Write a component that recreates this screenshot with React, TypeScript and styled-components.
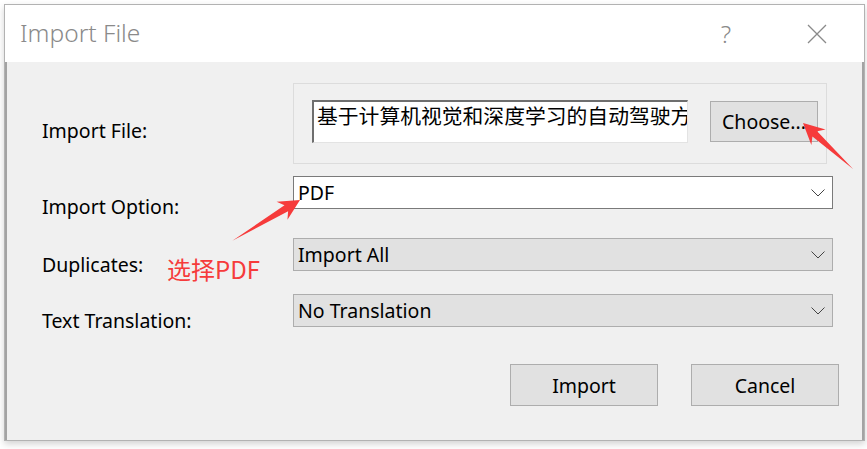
import styled, { createGlobalStyle } from 'styled-components';

const GlobalStyle = createGlobalStyle`
	html, body {
		margin: 0;
		padding: 0;
		background: #ffffff;
	}
	body {
		font-family: 'Noto Sans', 'Noto Sans CJK SC', sans-serif;
		color: #000000;
	}
`;

const Page = styled.div`
	position: relative;
	width: 867px;
	height: 449px;
	overflow: hidden;
`;

const Window = styled.div`
	margin: 4px 0 0 4px;
	width: 861px;
	height: 437px;
	box-sizing: border-box;
	border: 1px solid #b2b2b2;
	box-shadow: 0 3px 7px rgba(0, 0, 0, 0.18);
	display: flex;
	flex-direction: column;
	background: #f0f0f0;
`;

const TitleBar = styled.div`
	height: 57px;
	flex: none;
	background: #ffffff;
	display: flex;
	align-items: center;
	padding: 0 6px 0 15px;
	color: #8a8a8a;
	font-size: 24.5px;
	font-weight: 300;
`;

const Title = styled.div`
	flex: 1;
	margin-top: -2px;
`;

const TitleButton = styled.div<{ $width: number }>`
	width: ${p => p.$width}px;
	height: 57px;
	display: flex;
	align-items: center;
	justify-content: center;
	color: #8a8a8a;
`;

const Body = styled.div`
	flex: 1;
	border-left: 2px solid #a3a3a3;
	border-right: 2px solid #a3a3a3;
	padding: 21px 27px 0 35px;
	display: flex;
	flex-direction: column;
`;

const Row = styled.div<{ $gap: number; $height: number }>`
	display: grid;
	grid-template-columns: 251px 540px;
	align-items: start;
	margin-top: ${p => p.$gap}px;
	height: ${p => p.$height}px;
`;

const Label = styled.div<{ $offset: number }>`
	padding-top: ${p => p.$offset}px;
	font-size: 19.5px;
	line-height: 24px;
	white-space: nowrap;
`;

const GroupBox = styled.div`
	width: 534px;
	height: 81px;
	box-sizing: border-box;
	border: 1px solid #dcdcdc;
	display: flex;
	align-items: flex-start;
	padding: 16px 0 0 18px;
	gap: 22px;
`;

const PathField = styled.div`
	width: 376px;
	height: 43px;
	flex: none;
	box-sizing: border-box;
	background: #ffffff;
	border-top: 2px solid #6e6e6e;
	border-left: 2px solid #6e6e6e;
	border-right: 1px solid #e3e3e3;
	border-bottom: 1px solid #e3e3e3;
	padding: 1px 0 0 3px;
	font-family: 'Noto Sans CJK SC', sans-serif;
	font-size: 20.8px;
	line-height: 24px;
	white-space: nowrap;
	overflow: hidden;
`;

const Button = styled.button<{ $width: number; $height: number }>`
	width: ${p => p.$width}px;
	height: ${p => p.$height}px;
	flex: none;
	box-sizing: border-box;
	background: #e1e1e1;
	border: 1px solid #adadad;
	border-radius: 0;
	padding: 0;
	font-family: 'Noto Sans', sans-serif;
	font-size: 19.5px;
	color: #000000;
	margin-top: ${p => (p.$height === 41 ? 1 : 0)}px;
`;

const Combo = styled.div<{ $editable?: boolean }>`
	width: 540px;
	height: 33px;
	box-sizing: border-box;
	background: ${p => (p.$editable ? '#ffffff' : '#e1e1e1')};
	border: 1px solid ${p => (p.$editable ? '#7a7a7a' : '#adadad')};
	display: flex;
	align-items: center;
	justify-content: space-between;
	padding: 0 7px 0 4px;
	font-size: 19.5px;
	line-height: 24px;
`;

const Actions = styled.div`
	display: flex;
	justify-content: flex-end;
	gap: 33px;
	margin-top: 37px;
	margin-right: -4px;
`;

const Note = styled.div`
	position: absolute;
	left: 167px;
	top: 251px;
	font-family: 'Noto Sans CJK SC', sans-serif;
	font-size: 24px;
	color: #f63b3b;
	white-space: nowrap;
`;

const Overlay = styled.svg`
	position: absolute;
	left: 0;
	top: 0;
	pointer-events: none;
`;

const Chevron = () => (
	<svg width="14" height="8" viewBox="0 0 14 8">
		<polyline points="0.5,0.5 7,7 13.5,0.5" fill="none" stroke="#444" strokeWidth="1" />
	</svg>
);

const CloseIcon = () => (
	<svg width="20" height="20" viewBox="0 0 20 20">
		<path d="M1 1 L19 19 M19 1 L1 19" stroke="#8a8a8a" strokeWidth="1.3" fill="none" />
	</svg>
);

// annotation arrow: tip at (x, y), pointing along angle
const Arrow = ({ x, y, angle, length }: { x: number; y: number; angle: number; length: number }) => (
	<polygon
		transform={`translate(${x} ${y}) rotate(${angle})`}
		points={`${-length},0 -16,-3.5 -21,-10.5 0,0 -21,10.5 -16,3.5`}
		fill="#f63b3b"
	/>
);

export default function App() {
	return (
		<Page>
			<GlobalStyle />
			<Window>
				<TitleBar>
					<Title>Import File</Title>
					<TitleButton $width={100}>?</TitleButton>
					<TitleButton $width={82}>
						<CloseIcon />
					</TitleButton>
				</TitleBar>
				<Body>
					<Row $gap={0} $height={81}>
						<Label $offset={36}>Import File:</Label>
						<GroupBox>
							<PathField>基于计算机视觉和深度学习的自动驾驶方法研究.pdf</PathField>
							<Button $width={108} $height={41}>Choose...</Button>
						</GroupBox>
					</Row>
					<Row $gap={12} $height={33}>
						<Label $offset={19}>Import Option:</Label>
						<Combo $editable>
							<span>PDF</span>
							<Chevron />
						</Combo>
					</Row>
					<Row $gap={29} $height={33}>
						<Label $offset={15}>Duplicates:</Label>
						<Combo>
							<span>Import All</span>
							<Chevron />
						</Combo>
					</Row>
					<Row $gap={23} $height={33}>
						<Label $offset={15}>Text Translation:</Label>
						<Combo>
							<span>No Translation</span>
							<Chevron />
						</Combo>
					</Row>
					<Actions>
						<Button $width={148} $height={42}>Import</Button>
						<Button $width={148} $height={42}>Cancel</Button>
					</Actions>
				</Body>
			</Window>
			<Note>选择PDF</Note>
			<Overlay width="867" height="449">
				<Arrow x={300} y={200} angle={-31.1} length={79} />
				<Arrow x={803} y={123} angle={-137.4} length={68} />
			</Overlay>
		</Page>
	);
}
